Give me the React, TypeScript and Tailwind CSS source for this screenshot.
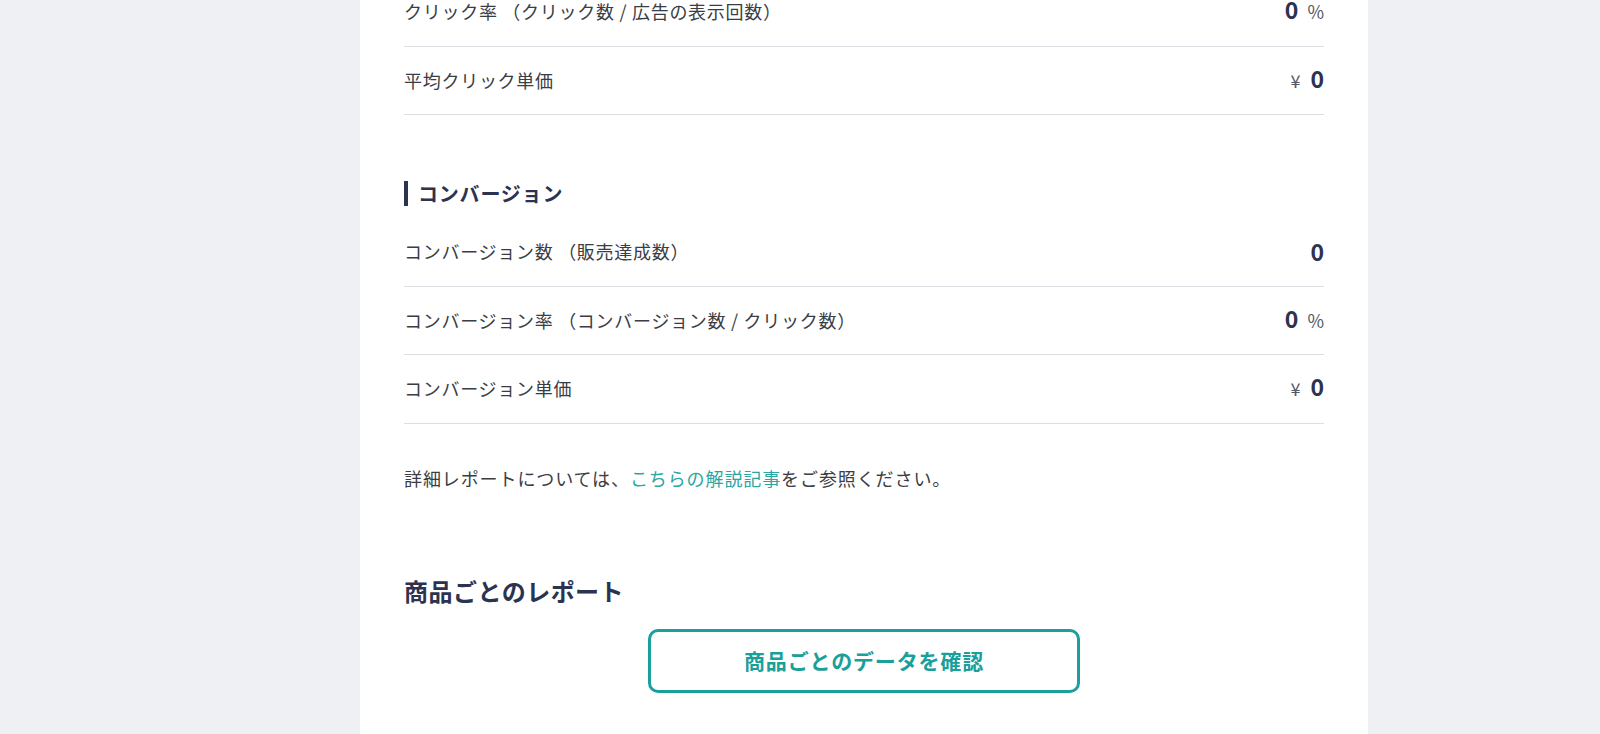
import React from "react";

const font = { fontFamily: '"Noto Sans CJK JP", "Noto Sans", sans-serif' };

function Row({ label, value, unit, yen }: { label: string; value: string; unit?: string; yen?: boolean }) {
  return (
    <div className="flex h-[68.5px] items-center justify-between border-b border-[#dcdee3]">
      <span className="text-[18px] tracking-[0.04em] text-[#3a3d44]">{label}</span>
      <span className="flex items-baseline text-[#2b3350]">
        {yen && <span className="mr-[10px] text-[18px] text-[#555a66]">¥</span>}
        <span className="text-[23px] font-bold leading-none">{value}</span>
        {unit && <span className="ml-[9px] text-[18px] text-[#555a66]">{unit}</span>}
      </span>
    </div>
  );
}

export default function App() {
  return (
    <div className="flex h-[734px] w-full overflow-hidden bg-[#eef0f4]" style={font}>
      <div className="w-[360px] shrink-0" />
      <div className="w-[1008px] shrink-0 bg-white px-[44px]">
        <div className="-mt-[22px]">
          <Row label="クリック率 （クリック数 / 広告の表示回数）" value="0" unit="%" />
          <Row label="平均クリック単価" value="0" yen />
        </div>
        <h3 className="mt-[66px] mb-[12px] flex h-[25px] items-center border-l-[4px] border-[#2b3350] pl-[10px] text-[20px] font-bold leading-[25px] tracking-[0.04em] text-[#2b3350]">
          コンバージョン
        </h3>
        <Row label="コンバージョン数 （販売達成数）" value="0" />
        <Row label="コンバージョン率 （コンバージョン数 / クリック数）" value="0" unit="%" />
        <Row label="コンバージョン単価" value="0" yen />
        <p className="mt-[40px] text-[18px] leading-[28px] tracking-[0.05em] text-[#3a3d44]">
          詳細レポートについては、<a className="text-[#2aa7a4]">こちらの解説記事</a>をご参照ください。
        </p>
        <h2 className="mt-[83px] text-[24px] font-bold leading-[32px] tracking-[0.02em] text-[#2b3350]">商品ごとのレポート</h2>
        <div className="mt-[22px] flex justify-center">
          <button className="flex h-[64px] w-[432px] items-center justify-center rounded-[10px] border-[3px] border-[#1a9f9b] bg-white text-[21px] font-bold tracking-[0.04em] text-[#1a9f9b]">
            商品ごとのデータを確認
          </button>
        </div>
      </div>
    </div>
  );
}
